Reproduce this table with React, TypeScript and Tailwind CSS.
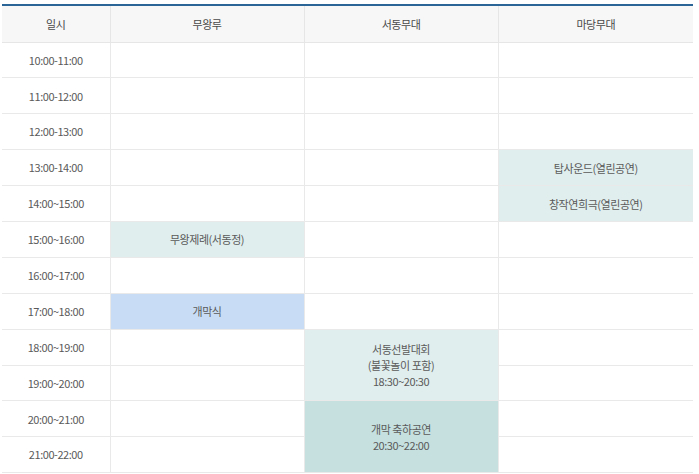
import React from 'react';

type Cell = { text?: string[]; rowSpan?: number; bg?: string; skip?: boolean };

const times = [
  '10:00-11:00',
  '11:00-12:00',
  '12:00-13:00',
  '13:00-14:00',
  '14:00~15:00',
  '15:00~16:00',
  '16:00~17:00',
  '17:00~18:00',
  '18:00~19:00',
  '19:00~20:00',
  '20:00~21:00',
  '21:00-22:00',
];

// one entry per row: [무왕루, 서동무대, 마당무대]
const rows: Cell[][] = [
  [{}, {}, {}],
  [{}, {}, {}],
  [{}, {}, {}],
  [{}, {}, { text: ['탑사운드(열린공연)'], bg: 'bg-[#e0eeee]' }],
  [{}, {}, { text: ['창작연희극(열린공연)'], bg: 'bg-[#e0eeee]' }],
  [{ text: ['무왕제례(서동정)'], bg: 'bg-[#e0eeee]' }, {}, {}],
  [{}, {}, {}],
  [{ text: ['개막식'], bg: 'bg-[#c8ddf5]' }, {}, {}],
  [{}, { text: ['서동선발대회', '(불꽃놀이 포함)', '18:30~20:30'], rowSpan: 2, bg: 'bg-[#e0eeee]' }, {}],
  [{}, { skip: true }, {}],
  [{}, { text: ['개막 축하공연', '20:30~22:00'], rowSpan: 2, bg: 'bg-[#c5e0df]' }, {}],
  [{}, { skip: true }, {}],
];

export default function App() {
  return (
    <div
      className="w-[699px] h-[474px] bg-white overflow-hidden pt-[4px] pl-[2px]"
      style={{ fontFamily: '"Noto Sans CJK KR", "Noto Sans", sans-serif' }}
    >
      <table className="w-[691px] table-fixed border-collapse border-t-2 border-t-[#2b6597] text-[11px] text-[#5a5a5a] tracking-[-0.45px]">
        <colgroup>
          <col className="w-[108px]" />
          <col className="w-[194px]" />
          <col className="w-[194px]" />
          <col className="w-[195px]" />
        </colgroup>
        <thead>
          <tr className="h-[37px] bg-[#f7f7f7]">
            {['일시', '무왕루', '서동무대', '마당무대'].map((h, i) => (
              <th
                key={h}
                className={`font-normal text-[#4a4a4a] border-b border-[#e6e6e6] ${i > 0 ? 'border-l' : ''}`}
              >
                {h}
              </th>
            ))}
          </tr>
        </thead>
        <tbody>
          {times.map((t, r) => (
            <tr key={t} className="h-[35.9px]">
              <td className="text-center border-b border-[#e9e9e9]">{t}</td>
              {rows[r].map((c, i) =>
                c.skip ? null : (
                  <td
                    key={i}
                    rowSpan={c.rowSpan}
                    className={`text-center leading-[16px] border-b border-l border-[#e9e9e9] ${c.bg || ''}`}
                  >
                    {c.text?.map(line => (
                      <div key={line}>{line}</div>
                    ))}
                  </td>
                )
              )}
            </tr>
          ))}
        </tbody>
      </table>
    </div>
  );
}
